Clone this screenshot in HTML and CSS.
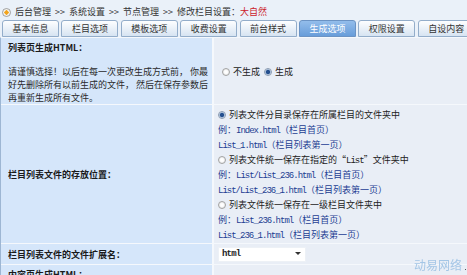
FILE: index.html
```html
<!doctype html>
<html lang="zh-CN">
  <head>
    <meta charset="UTF-8" />
    <meta name="viewport" content="width=device-width, initial-scale=1.0" />
    <title>修改栏目设置</title>
    <link rel="stylesheet" href="styles.css">
  </head>
  <body>
    <div id="page">
      <div id="crumb">
        <svg class="crumb-icon" width="9" height="9" viewBox="0 0 9 9">
          <circle cx="4.5" cy="4.5" r="4" fill="#f4f4f0" stroke="#8c8c8c" stroke-width="0.8" />
          <path d="M4.5 1.8 L7.2 4.5 L4.5 7.2 L1.8 4.5 Z" fill="#f2a41c" />
        </svg>
        <span>后台管理 &gt;&gt; 系统设置 &gt;&gt; 节点管理 &gt;&gt; 修改栏目设置：<span class="red">大自然</span></span>
      </div>

      <ul id="tabs">
        <li>基本信息</li>
        <li>栏目选项</li>
        <li>模板选项</li>
        <li>收费设置</li>
        <li>前台样式</li>
        <li class="active">生成选项</li>
        <li>权限设置</li>
        <li>自设内容</li>
      </ul>

      <table id="form">
        <tr>
          <td class="label top">
            <b>列表页生成HTML：</b>
            <p class="note">请谨慎选择！以后在每一次更改生成方式前， 你最<br>好先删除所有以前生成的文件， 然后在保存参数后<br>再重新生成所有文件。</p>
          </td>
          <td class="field first">
            <label><input type="radio" name="listhtml"> 不生成</label>
            <label><input type="radio" name="listhtml" checked> 生成</label>
          </td>
        </tr>
        <tr>
          <td class="label"><b>栏目列表文件的存放位置：</b></td>
          <td class="field lines">
            <label class="opt"><input type="radio" name="listpath" checked> 列表文件分目录保存在所属栏目的文件夹中</label>
            <div class="eg">例：<span class="code">Index.html</span>（栏目首页）</div>
            <div class="eg"><span class="code">List_1.html</span>（栏目列表第一页）</div>
            <label class="opt"><input type="radio" name="listpath"> 列表文件统一保存在指定的“<span class="code">List</span>”文件夹中</label>
            <div class="eg">例：<span class="code">List/List_236.html</span>（栏目首页）</div>
            <div class="eg"><span class="code">List/List_236_1.html</span>（栏目列表第一页）</div>
            <label class="opt"><input type="radio" name="listpath"> 列表文件统一保存在一级栏目文件夹中</label>
            <div class="eg">例：<span class="code">List_236.html</span>（栏目首页）</div>
            <div class="eg"><span class="code">List_236_1.html</span>（栏目列表第一页）</div>
          </td>
        </tr>
        <tr class="short">
          <td class="label"><b>栏目列表文件的文件扩展名：</b></td>
          <td class="field">
            <span class="select">
              <select name="ext">
                <option>html</option>
                <option>htm</option>
                <option>shtml</option>
              </select>
            </span>
          </td>
        </tr>
        <tr>
          <td class="label top"><b>内容页生成HTML：</b></td>
          <td class="field"></td>
        </tr>
      </table>
    </div>

    <div class="watermark">动易网络</div>
    <div class="dot"></div>
  </body>
</html>
```

FILE: styles.css
```css
body {
  margin: 0;
  font-family: "Noto Sans CJK SC", "Liberation Sans", sans-serif;
  font-size: 9px;
  color: #222;
  background-color: #eaf1f9;
  overflow: hidden;
}

#page {
  width: 560px;
}

#crumb {
  display: flex;
  align-items: center;
  gap: 4px;
  height: 16px;
  padding: 4px 0 0 2px;
  line-height: 16px;
  word-spacing: 2px;
  color: #333;
}

.crumb-icon {
  flex: 0 0 9px;
}

.red {
  color: #cc2229;
}

#tabs {
  display: flex;
  gap: 2.4px;
  margin: 0;
  padding: 0 0 0 2px;
  list-style: none;
}

#tabs li {
  flex: 0 0 57px;
  box-sizing: border-box;
  height: 17px;
  line-height: 15px;
  text-align: center;
  color: #333;
  border: 1px solid #93adca;
  border-radius: 3px 3px 0 0;
  background: linear-gradient(#fdfeff, #d7e4f2);
}

#tabs li.active {
  color: #fff;
  border-color: #6b93c4;
  background: linear-gradient(#93bdeb, #689dda);
}

#form {
  border-collapse: separate;
  border-spacing: 0;
  border-left: 1px solid #9db6d3;
  border-top: 1px solid #f5f8fc;
  width: 100%;
}

#form td {
  border-bottom: 1px solid #f5f8fc;
  line-height: 13px;
}

.label {
  width: 204px;
  padding: 0 0 0 7px;
  background-color: #d5e6fa;
  border-right: 2px solid #f5f8fc;
  vertical-align: middle;
  color: #1a1a1a;
}

.label.top {
  vertical-align: top;
  padding-top: 3px;
}

.note {
  margin: 11px 0 0;
  color: #2a2a2a;
  white-space: nowrap;
}

.field {
  padding: 0 0 0 4px;
  background-color: #e9eef6;
  vertical-align: middle;
}

.field.first {
  padding-left: 8px;
}

.field label {
  margin-right: 2px;
}

.lines {
  padding-top: 2px;
  padding-bottom: 1px;
}

.opt,
.eg {
  display: block;
  height: 15px;
  line-height: 15px;
}

.eg {
  color: #1d3d92;
}

.code {
  font-family: "Liberation Mono", monospace;
  font-size: 9px;
  line-height: 1;
  letter-spacing: -1px;
}

input[type="radio"] {
  appearance: none;
  -webkit-appearance: none;
  width: 8px;
  height: 8px;
  margin: 0 1px 0 0;
  border: 1px solid #a3a3a3;
  border-radius: 50%;
  background: radial-gradient(circle, #ffffff 30%, #dcdcdc);
  vertical-align: -1px;
}

input[type="radio"]:checked {
  border-color: #8a9ab0;
  background: radial-gradient(circle, #244f8e 0 1.8px, #9cb7d8 2.4px, #f4f6fa 3.4px);
}

.short td {
  height: 20px;
}

.select {
  position: relative;
  display: inline-block;
  vertical-align: middle;
}

.select select {
  appearance: none;
  -webkit-appearance: none;
  width: 88px;
  height: 15px;
  padding: 0 0 0 3px;
  border: 1px solid #edf1f6;
  background-color: #fff;
  font-family: "Liberation Mono", monospace;
  font-size: 9px;
  font-weight: bold;
  letter-spacing: -0.8px;
  color: #222;
}

.select::after {
  content: "";
  position: absolute;
  right: 5px;
  top: 6px;
  border-left: 3px solid transparent;
  border-right: 3px solid transparent;
  border-top: 3px solid #333;
}

.watermark {
  position: fixed;
  right: 5px;
  bottom: 3px;
  font-size: 12px;
  line-height: 14px;
  color: #a4c6e6;
}

.dot {
  position: fixed;
  right: 1px;
  bottom: 5px;
  width: 1px;
  height: 1px;
  background-color: #555;
}
```
